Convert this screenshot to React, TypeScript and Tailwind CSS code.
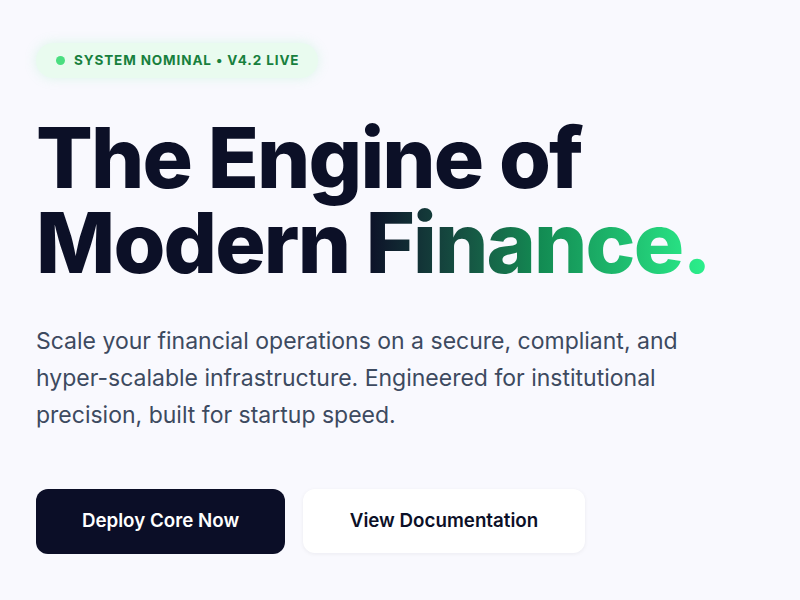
export default function App() {
  return (
    <div
      className="min-h-[600px] w-full bg-[#f9f9fe] px-9 pt-[43px]"
      style={{ fontFamily: "Inter, 'Noto Sans', sans-serif" }}
    >
      <div className="inline-flex h-[35px] items-center gap-[9px] rounded-full bg-[#e9fbef] pl-[20px] pr-[19px] shadow-[0_0_12px_rgba(134,239,172,0.25)]">
        <span className="h-[9px] w-[9px] rounded-full bg-[#4ade80]" />
        <span className="text-[13.5px] font-bold tracking-[0.065em] text-[#17803d]">
          SYSTEM NOMINAL • V4.2 LIVE
        </span>
      </div>

      <h1 className="mt-[37px] text-[84px] font-extrabold leading-[85px] tracking-[-0.022em] text-[#0c1027]">
        The Engine of
        <br />
        Modern{" "}
        <span className="bg-gradient-to-r from-[#0c1027] via-[#128a52] to-[#2cf28d] bg-clip-text text-transparent">
          Finance.
        </span>
      </h1>

      <p className="mt-[38px] max-w-[690px] text-[23px] leading-[37px] text-[#3d4a60]">
        Scale your financial operations on a secure, compliant, and hyper-scalable infrastructure. Engineered for
        institutional precision, built for startup speed.
      </p>

      <div className="mt-[55px] flex gap-[18px]">
        <button className="h-[65px] w-[249px] rounded-[12px] bg-[#0b0e27] text-[18.75px] font-semibold text-white">
          Deploy Core Now
        </button>
        <button className="h-[64px] w-[282px] rounded-[12px] bg-white text-[18.75px] font-semibold text-[#0c1027] shadow-[0_1px_4px_rgba(15,23,42,0.06)]">
          View Documentation
        </button>
      </div>
    </div>
  )
}
